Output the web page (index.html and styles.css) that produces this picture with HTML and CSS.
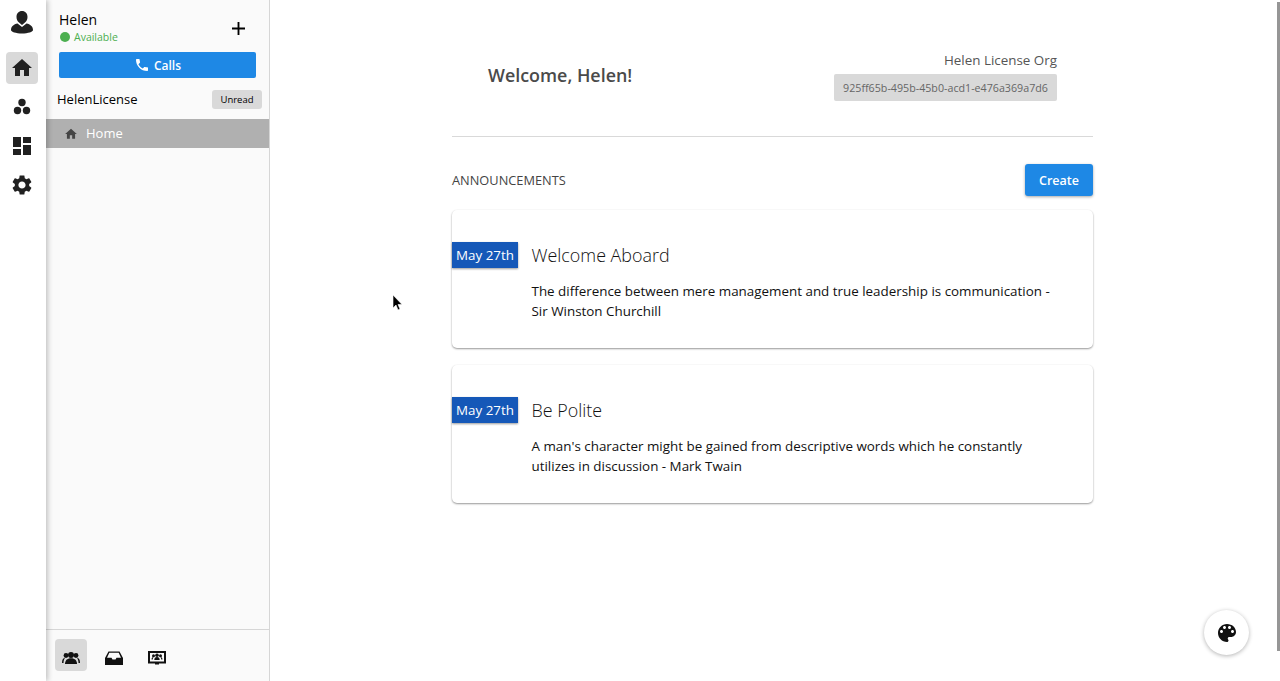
FILE: index.html
```html
<!DOCTYPE html>
<html lang="en">
<head>
<meta charset="utf-8">
<title>Welcome</title>
<link rel="stylesheet" href="styles.css">
</head>
<body>
<div class="app">
  <nav class="rail">
    <div class="rail-avatar">
      <svg class="ico-26" viewBox="0 0 26 26"><path d="M13 2c3.300 0 5.500 2.500 5.500 6 0 2.500-1 4.500-2.500 5.600l-3 2.400-3-2.400C8.500 12.500 7.500 10.500 7.500 8c0-3.500 2.200-6 5.500-6z"/><path d="M8.500 14.500 13 18l4.500-3.500c3.700.8 6.500 3 6.500 6.500 0 1.800-5 3.500-11 3.500S2 22.800 2 21c0-3.500 2.800-5.700 6.500-6.500z"/></svg>
    </div>
    <div class="rail-btn rail-btn-on"><svg class="ico-24" viewBox="0 0 24 24"><path d="M10 20v-6h4v6h5v-8h3L12 3 2 12h3v8z"/></svg></div>
    <div class="rail-btn"><svg class="ico-24" viewBox="0 0 24 24"><circle cx="12" cy="7.500" r="3.700"/><circle cx="7.500" cy="15.500" r="3.700"/><circle cx="16.500" cy="15.500" r="3.700"/></svg></div>
    <div class="rail-btn"><svg class="ico-24" viewBox="0 0 24 24"><path d="M3 13h8V3H3v10zm0 8h8v-6H3v6zm10 0h8V11h-8v10zm0-18v6h8V3h-8z"/></svg></div>
    <div class="rail-btn"><svg class="ico-24" viewBox="0 0 24 24"><path d="M19.140 12.940c.04-.3.06-.61.06-.94 0-.32-.02-.64-.07-.94l2.030-1.580c.18-.14.23-.41.12-.61l-1.920-3.320c-.12-.22-.37-.29-.59-.22l-2.390.96c-.5-.38-1.030-.7-1.620-.94l-.36-2.540c-.04-.24-.24-.41-.48-.41h-3.840c-.24 0-.43.17-.47.41l-.36 2.540c-.59.24-1.130.57-1.620.94l-2.390-.96c-.22-.08-.47 0-.59.22L2.740 8.870c-.12.21-.08.47.12.61l2.030 1.580c-.05.3-.09.63-.09.94s.02.64.07.94l-2.030 1.580c-.18.14-.23.41-.12.61l1.920 3.320c.12.22.37.29.59.22l2.390-.96c.5.38 1.030.7 1.620.94l.36 2.540c.05.24.24.41.48.41h3.840c.24 0 .44-.17.47-.41l.36-2.540c.59-.24 1.130-.56 1.620-.94l2.390.96c.22.08.47 0 .59-.22l1.920-3.320c.12-.22.07-.47-.12-.61l-2.010-1.580zM12 15.600c-1.980 0-3.600-1.620-3.600-3.600s1.620-3.600 3.600-3.600 3.600 1.620 3.600 3.600-1.620 3.600-3.600 3.600z"/></svg></div>
  </nav>

  <aside class="side">
    <div class="side-top">
      <div class="user">
        <div class="user-name">Helen</div>
        <div class="user-status"><span class="dot"></span>Available</div>
      </div>
      <svg class="plus" viewBox="0 0 14 14"><path d="M6 0h2v6h6v2H8v6H6V8H0V6h6z"/></svg>
    </div>
    <div class="calls">
      <svg class="calls-ico" viewBox="0 0 24 24"><path d="M6.620 10.790c1.440 2.830 3.760 5.140 6.590 6.590l2.200-2.200c.27-.27.67-.36 1.020-.24 1.120.37 2.330.57 3.570.57.55 0 1 .45 1 1V20c0 .55-.45 1-1 1-9.390 0-17-7.610-17-17 0-.55.45-1 1-1h3.500c.55 0 1 .45 1 1 0 1.250.2 2.450.57 3.570.11.35.03.74-.25 1.020l-2.200 2.200z"/></svg>
      Calls
    </div>
    <div class="org-row">
      <span class="org-name">HelenLicense</span>
      <span class="unread">Unread</span>
    </div>
    <div class="side-item">
      <svg class="side-item-ico" viewBox="0 0 24 24"><path d="M10 20v-6h4v6h5v-8h3L12 3 2 12h3v8z"/></svg>
      <span class="side-item-label">Home</span>
    </div>
    <div class="side-foot">
      <div class="foot-btn foot-btn-on">
        <svg class="ico-20" viewBox="0 0 20 20"><circle cx="10" cy="7" r="3"/><circle cx="5" cy="7.500" r="2.400"/><circle cx="15" cy="7.500" r="2.400"/><path d="M4 16c0-3.600 2-5.800 6-5.800s6 2.200 6 5.800z"/><path d="M1 15c0-3.200 1-4.700 3-5.200-1 1.500-1.500 3.300-1.500 5.200zM19 15c0-3.200-1-4.700-3-5.200 1 1.500 1.500 3.300 1.500 5.200z"/></svg>
      </div>
      <div class="foot-btn">
        <svg class="ico-20" viewBox="0 0 20 20"><path d="M4.500 3.500h11L19 10v7H1v-7zM5.300 4.800 3 9.800h4.500l1 1.800h3l1-1.800H17l-2.300-5z"/></svg>
      </div>
      <div class="foot-btn">
        <svg class="ico-20" viewBox="0 0 20 20"><path fill-rule="evenodd" d="M1 3h18v12.500h-7v1h-4v-1H1zm2 2v8.500h14V5z"/><circle cx="10" cy="7.300" r="1.800"/><circle cx="6.500" cy="7.800" r="1.500"/><circle cx="13.500" cy="7.800" r="1.500"/><path d="M7.300 12c0-1.800 .9-3 2.700-3s2.700 1.200 2.700 3zM4.500 11.500c0-1.500 .6-2.300 2-2.500-.5.800-.7 1.600-.7 2.500zM15.500 11.500c0-1.500-.6-2.300-2-2.500 .5.800.7 1.600.7 2.500z"/></svg>
      </div>
    </div>
  </aside>

  <main class="main">
    <div class="content">
      <header class="head">
        <h1 class="welcome">Welcome, Helen!</h1>
        <div class="org">
          <div class="org-label">Helen License Org</div>
          <div class="org-id">925ff65b-495b-45b0-acd1-e476a369a7d6</div>
        </div>
      </header>
      <div class="section-row">
        <h2 class="section-title">ANNOUNCEMENTS</h2>
        <div class="create">Create</div>
      </div>
      <article class="card">
        <div class="card-head">
          <div class="date">May 27th</div>
          <h3 class="card-title">Welcome Aboard</h3>
        </div>
        <p class="card-text">The difference between mere management and true leadership is communication - Sir Winston Churchill</p>
      </article>
      <article class="card">
        <div class="card-head">
          <div class="date">May 27th</div>
          <h3 class="card-title">Be Polite</h3>
        </div>
        <p class="card-text">A man's character might be gained from descriptive words which he constantly utilizes in discussion - Mark Twain</p>
      </article>
    </div>
  </main>
</div>

<div class="scrollbar"></div>
<div class="fab">
  <svg class="ico-24" viewBox="0 0 24 24"><path d="M12 3c-4.970 0-9 4.030-9 9s4.030 9 9 9c.83 0 1.500-.67 1.500-1.500 0-.39-.15-.74-.39-1.010-.23-.26-.38-.61-.38-.99 0-.83.67-1.500 1.500-1.500H16c2.760 0 5-2.240 5-5 0-4.420-4.030-8-9-8zm-5.500 9c-.83 0-1.500-.67-1.500-1.500S5.670 9 6.500 9 8 9.670 8 10.500 7.330 12 6.500 12zm3-4C8.670 8 8 7.330 8 6.500S8.670 5 9.500 5s1.500.67 1.500 1.500S10.330 8 9.500 8zm5 0c-.83 0-1.500-.67-1.500-1.500S13.670 5 14.500 5s1.500.67 1.500 1.500S15.330 8 14.500 8zm3 4c-.83 0-1.500-.67-1.500-1.500S16.670 9 17.500 9s1.500.67 1.500 1.500-.67 1.500-1.500 1.500z"/></svg>
</div>
<svg class="cursor" viewBox="0 0 10 17"><path d="M1 0v13l3-3 2 5 2-1-2-4.500h4z" fill="#000" stroke="#fff" stroke-width=".6"/></svg>
</body>
</html>
```

FILE: styles.css
```css
* { box-sizing: border-box; }
html, body { margin: 0; height: 100%; overflow: hidden; }
body { font-family: "Open Sans", "Liberation Sans", sans-serif; color: #000; background: #fff; }
h1, h2, h3, p { margin: 0; font-weight: inherit; }
svg { display: block; fill: currentColor; }

.app { display: flex; height: 681px; }

.rail { width: 46px; flex: none; background: #fff; box-shadow: 2px 0 5px rgba(0,0,0,.22); position: relative; z-index: 2; display: flex; flex-direction: column; align-items: center; padding: 9px 2px 0 0; color: #212121; }
.rail-avatar { height: 43px; display: flex; justify-content: center; }
.rail-btn { width: 32px; height: 32px; margin-bottom: 7px; border-radius: 4px; display: flex; align-items: center; justify-content: center; }
.rail-btn-on { background: #d9d9d9; }
.ico-26 { width: 26px; height: 26px; }
.ico-24 { width: 24px; height: 24px; }
.ico-20 { width: 20px; height: 20px; }

.side { width: 224px; flex: none; background: #fafafa; border-right: 1px solid #d6d6d6; display: flex; flex-direction: column; }
.side-top { height: 52px; padding: 11px 24px 0 13px; display: flex; justify-content: space-between; align-items: flex-start; }
.user-name { font-size: 14px; line-height: 18px; font-weight: 500; }
.user-status { font-size: 10.500px; line-height: 14px; margin-top: 1px; color: #4caf50; display: flex; align-items: center; }
.dot { width: 10px; height: 10px; border-radius: 50%; background: #4caf50; margin: 0 4px 0 1px; }
.plus { width: 13px; height: 13px; margin-top: 11px; color: #000; }

.calls { margin: 0 13px; height: 26px; border-radius: 2px; background: #1e88e5; color: #fff; font-size: 12px; font-weight: 600; display: flex; align-items: center; justify-content: center; gap: 4px; }
.calls-ico { width: 16px; height: 16px; }

.org-row { height: 41px; padding: 2px 7px 0 11px; display: flex; align-items: center; justify-content: space-between; }
.org-name { font-size: 13px; font-weight: 500; margin-top: -1px; }
.unread { width: 50px; height: 19px; background: #d9d9d9; border-radius: 3px; font-size: 9.500px; font-weight: 500; display: flex; align-items: center; justify-content: center; }

.side-item { height: 29px; background: #b0b0b0; color: #fff; font-size: 13px; display: flex; align-items: center; padding-left: 18px; }
.side-item-ico { width: 14px; height: 14px; margin-right: 8px; color: #444; }
.side-item-label { margin-top: -2px; }

.side-foot { margin-top: auto; height: 52px; border-top: 1px solid #d6d6d6; padding: 9px 0 0 9px; display: flex; gap: 11px; color: #111; }
.foot-btn { width: 32px; height: 32px; border-radius: 4px; display: flex; align-items: center; justify-content: center; }
.foot-btn svg { margin-top: 6px; }
.foot-btn-on { background: #d9d9d9; }

.main { flex: 1; min-width: 0; background: #fff; padding-left: 182px; }
.content { width: 641px; }
.head { height: 137px; border-bottom: 1px solid #d9d9d9; display: flex; justify-content: space-between; padding: 49px 36px 0; color: #444; }
.welcome { font-size: 17.900px; font-weight: 600; line-height: 24px; margin-top: 14px; color: #4a4a4a; }
.org { display: flex; flex-direction: column; align-items: flex-end; }
.org-label { font-size: 13.400px; line-height: 20px; margin-top: 1px; margin-bottom: 4px; color: #555; }
.org-id { width: 223px; height: 27px; background: #d9d9d9; border-radius: 2px; font-size: 10.700px; color: #666; display: flex; align-items: center; justify-content: center; }

.section-row { height: 73px; display: flex; align-items: center; justify-content: space-between; padding-top: 13px; }
.section-title { font-size: 12.800px; font-weight: 500; color: #444; }
.create { width: 68px; height: 32px; border-radius: 3px; background: #1e88e5; color: #fff; font-size: 12.500px; font-weight: 600; display: flex; align-items: center; justify-content: center; box-shadow: 0 1px 3px rgba(0,0,0,.35); }

.card { height: 138px; margin-bottom: 17px; background: #fff; border-radius: 5px; box-shadow: 0 1px 2px rgba(0,0,0,.4), 0 0 2px rgba(0,0,0,.03); padding-top: 32px; }
.card-head { display: flex; align-items: center; height: 26px; }
.date { width: 66px; height: 26px; background: #1558b8; color: #fff; font-size: 13.400px; display: flex; align-items: center; justify-content: center; box-shadow: 0 1px 2px rgba(0,0,0,.4); }
.card-title { margin-left: 13.500px; font-size: 17.900px; font-weight: 300; color: #111; }
.card-text { margin: 13px 40px 0 79.500px; font-size: 13.400px; line-height: 20px; color: #111; }

.scrollbar { position: absolute; right: 0; top: 2px; width: 3px; height: 649px; background: #969696; }
.fab { position: absolute; left: 1204px; top: 610px; width: 45px; height: 45px; border-radius: 50%; background: #fff; box-shadow: 0 1px 4px rgba(0,0,0,.3); display: flex; align-items: center; justify-content: center; color: #111; }
.cursor { position: absolute; left: 392px; top: 295px; width: 10px; height: 17px; }
```
